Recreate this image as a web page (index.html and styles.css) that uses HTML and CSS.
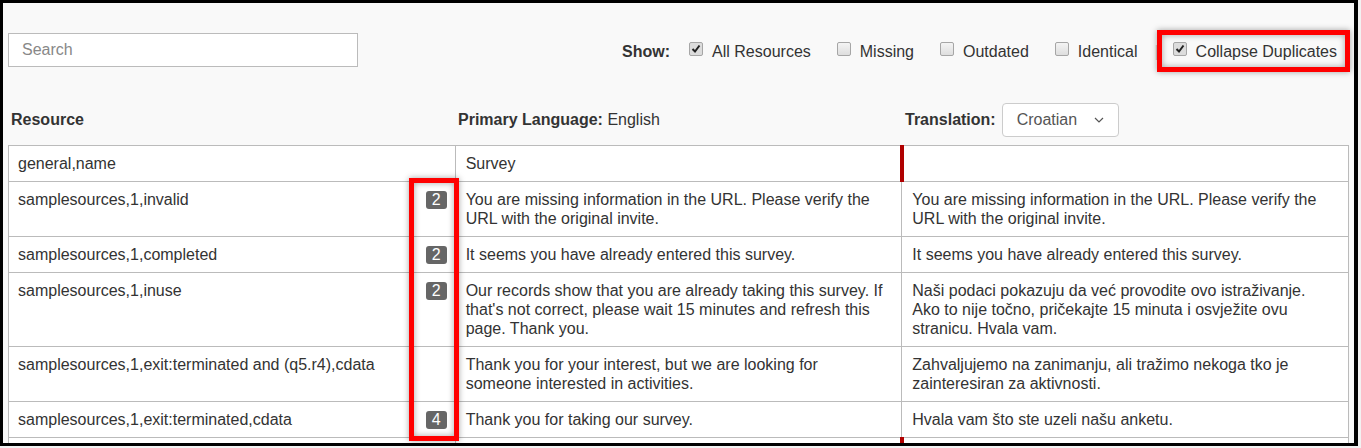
FILE: index.html
```html
<!DOCTYPE html>
<html lang="en">
<head>
    <meta charset="UTF-8">
    <meta name="viewport" content="width=device-width, initial-scale=1.0">
    <title>Translations</title>
    <link rel="stylesheet" href="styles.css">
</head>
<body>
    <div class="frame">
        <div class="toolbar">
            <input type="text" class="search" placeholder="Search">
            <div class="filters">
                <span class="show-label">Show:</span>
                <label class="filter"><span class="box checked"></span>All Resources</label>
                <label class="filter"><span class="box"></span>Missing</label>
                <label class="filter"><span class="box"></span>Outdated</label>
                <label class="filter"><span class="box"></span>Identical</label>
                <span class="sep">|</span>
                <label class="filter last"><span class="box checked"></span>Collapse Duplicates</label>
            </div>
        </div>

        <div class="columns-head">
            <div class="col-title"><strong>Resource</strong></div>
            <div class="col-title"><strong>Primary Language:</strong>&nbsp;English</div>
            <div class="col-title">
                <strong>Translation:</strong>
                <div class="select"><span>Croatian</span><svg width="10" height="6" viewBox="0 0 10 6"><path d="M1 1l4 4 4-4" fill="none" stroke="#555" stroke-width="1.2"/></svg></div>
            </div>
        </div>

        <table class="strings">
            <tr>
                <td>general,name</td>
                <td>Survey</td>
                <td class="missing"></td>
            </tr>
            <tr>
                <td><span class="badge">2</span>samplesources,1,invalid</td>
                <td>You are missing information in the URL. Please verify the URL with the original invite.</td>
                <td>You are missing information in the URL. Please verify the URL with the original invite.</td>
            </tr>
            <tr>
                <td><span class="badge">2</span>samplesources,1,completed</td>
                <td>It seems you have already entered this survey.</td>
                <td>It seems you have already entered this survey.</td>
            </tr>
            <tr>
                <td><span class="badge">2</span>samplesources,1,inuse</td>
                <td>Our records show that you are already taking this survey. If that's not correct, please wait 15 minutes and refresh this page. Thank you.</td>
                <td>Naši podaci pokazuju da već provodite ovo istraživanje. Ako to nije točno, pričekajte 15 minuta i osvježite ovu stranicu. Hvala vam.</td>
            </tr>
            <tr>
                <td>samplesources,1,exit:terminated and (q5.r4),cdata</td>
                <td>Thank you for your interest, but we are looking for someone interested in activities.</td>
                <td>Zahvaljujemo na zanimanju, ali tražimo nekoga tko je zainteresiran za aktivnosti.</td>
            </tr>
            <tr>
                <td><span class="badge">4</span>samplesources,1,exit:terminated,cdata</td>
                <td>Thank you for taking our survey.</td>
                <td>Hvala vam što ste uzeli našu anketu.</td>
            </tr>
            <tr>
                <td>&nbsp;</td>
                <td>&nbsp;</td>
                <td class="missing">&nbsp;</td>
            </tr>
        </table>

        <!-- annotation boxes -->
        <div class="mark mark-collapse"></div>
        <div class="mark mark-badges"></div>
    </div>
</body>
</html>
```

FILE: styles.css
```css
body {
    margin: 0;
    background: #f2f2f2;
    font-family: "Liberation Sans", Arial, sans-serif;
    font-size: 16px;
    color: #333;
}
.frame {
    position: relative;
    box-sizing: border-box;
    width: 1358px;
    height: 446px;
    border: 3px solid #000;
    border-right-width: 4px;
    padding: 30px 5px 0 5px;
    background: #f9f9f9;
    overflow: hidden;
}
.toolbar {
    display: flex;
    justify-content: space-between;
    align-items: center;
    height: 34px;
}
.search {
    box-sizing: border-box;
    width: 350px;
    height: 34px;
    border: 1px solid #bbb;
    padding: 0 13px;
    font-family: inherit;
    font-size: 16px;
    color: #333;
    background: #fff;
    outline: none;
}
.search::placeholder {
    color: #888;
}
.filters {
    display: flex;
    align-items: center;
    margin-right: 12px;
    margin-top: 3px;
}
.show-label {
    font-weight: bold;
    margin-right: 19px;
}
.filter {
    display: flex;
    align-items: center;
    margin-right: 26px;
}
.filter.last {
    margin-right: 0;
}
.box {
    box-sizing: border-box;
    width: 14px;
    height: 14px;
    margin-right: 9px;
    margin-top: -6px;
    border: 1px solid #a6a6a6;
    border-radius: 2px;
    background: linear-gradient(#f4f4f4, #dedede);
}
.box.checked {
    background: #dcdcdc url("data:image/svg+xml;utf8,<svg xmlns='http://www.w3.org/2000/svg' width='12' height='12' viewBox='0 0 12 12'><path d='M2.5 6l2.5 2.5 4.5-6' fill='none' stroke='%23222' stroke-width='2'/></svg>") center no-repeat;
}
.sep {
    color: #ccc;
    margin: 0 14px 0 -9px;
}
.columns-head {
    display: grid;
    grid-template-columns: repeat(3, 1fr);
    align-items: center;
    width: 1341px;
    height: 34px;
    margin-top: 36px;
    margin-bottom: 8px;
}
.col-title {
    display: flex;
    align-items: center;
    padding-left: 3px;
}
.select {
    display: flex;
    align-items: center;
    gap: 17px;
    box-sizing: border-box;
    height: 34px;
    margin-left: 6px;
    padding: 0 14px;
    border: 1px solid #ccc;
    border-radius: 4px;
    background: #fff;
    color: #555;
    font-size: 16px;
}
.strings {
    width: 1341px;
    table-layout: fixed;
    border-collapse: collapse;
    background: #fff;
}
.strings td {
    border: 1px solid #bbb;
    padding: 8px 17px 8px 10px;
    line-height: 19px;
    vertical-align: top;
}
.strings td:first-child {
    padding-left: 9px;
    padding-right: 8px;
}
.strings td.missing {
    border-left: 4px solid #b00000;
}
.badge {
    float: right;
    margin-top: 1px;
    padding: 0 6px;
    line-height: 18px;
    font-size: 16px;
    color: #fff;
    background: #666;
    border-radius: 3px;
}
.mark {
    position: absolute;
    box-sizing: border-box;
    border: 5px solid #f00;
    box-shadow: 0 0 6px rgba(0, 0, 0, 0.35), inset 0 0 6px rgba(0, 0, 0, 0.35);
}
.mark-collapse {
    left: 1154px;
    top: 27px;
    width: 193px;
    height: 42px;
}
.mark-badges {
    left: 406px;
    top: 175px;
    width: 50px;
    height: 263px;
}
```
